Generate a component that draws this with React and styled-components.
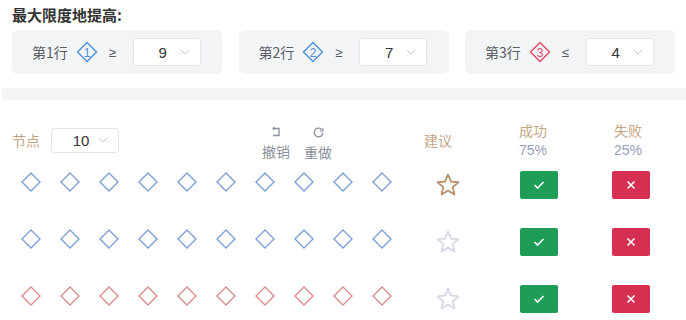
import React from "react";
import styled, { createGlobalStyle } from "styled-components";

const Global = createGlobalStyle`
  body {
    margin: 0;
    background: #fff;
    font-family: "Noto Sans CJK SC", "Noto Sans", sans-serif;
  }
`;

const BLUE = "#7b9fd3";
const RED = "#d98c88";

function Chevron() {
  return (
    <svg width="10" height="6" viewBox="0 0 10 6">
      <path d="M1 1 L5 5 L9 1" fill="none" stroke="#c4c7cd" strokeWidth="1" />
    </svg>
  );
}

function Diamond({ color }) {
  return (
    <svg width="20" height="20" viewBox="0 0 20 20">
      <polygon points="10,1 19,10 10,19 1,10" fill="none" stroke={color} strokeWidth="1.4" />
    </svg>
  );
}

function Badge({ n, color }) {
  return (
    <svg width="22" height="22" viewBox="0 0 22 22">
      <polygon points="11,1.5 20.5,11 11,20.5 1.5,11" fill="none" stroke={color} strokeWidth="1.4" />
      <text x="11" y="15.5" textAnchor="middle" fontSize="12" fill={color} fontFamily="Liberation Sans, sans-serif">{n}</text>
    </svg>
  );
}

function Star({ color }) {
  return (
    <svg width="26" height="26" viewBox="0 0 24 24">
      <polygon
        points="12,2.5 14.8,8.9 21.6,9.5 16.4,14 18,20.8 12,17.2 6,20.8 7.6,14 2.4,9.5 9.2,8.9"
        fill="none"
        stroke={color}
        strokeWidth="1.7"
        strokeLinejoin="round"
      />
    </svg>
  );
}

function UndoIcon() {
  return (
    <svg width="12" height="12" viewBox="0 0 12 12">
      <path d="M3 2.5 H9 V9.5 H3" fill="none" stroke="#8b909c" strokeWidth="1.3" />
      <path d="M4.5 1 L3 2.5 L4.5 4" fill="none" stroke="#8b909c" strokeWidth="1.1" />
    </svg>
  );
}

function RedoIcon() {
  return (
    <svg width="13" height="13" viewBox="0 0 24 24" fill="none" stroke="#8b909c" strokeWidth="2.4">
      <path d="M20 12a8 8 0 1 1-2.4-5.7" />
      <path d="M20 4v5h-5" />
    </svg>
  );
}

const rules = [
  { n: 1, color: "#4d8fd8", op: "≥", value: 9 },
  { n: 2, color: "#4d8fd8", op: "≥", value: 7 },
  { n: 3, color: "#de4a62", op: "≤", value: 4 },
];

const rows = [
  { color: BLUE, star: "#b9946c" },
  { color: BLUE, star: "#d7d9e5" },
  { color: RED, star: "#d7d9e5" },
];

export default function App() {
  return (
    <>
      <Global />
      <Page>
        <Title>最大限度地提高:</Title>
        <Cards>
          {rules.map((r) => (
            <Card key={r.n}>
              <CardLabel>第{r.n}行</CardLabel>
              <Badge n={r.n} color={r.color} />
              <Op>{r.op}</Op>
              <Select>
                <span>{r.value}</span>
                <Chevron />
              </Select>
            </Card>
          ))}
        </Cards>
      </Page>
      <Strip />
      <Board>
        <HeaderRow>
          <Controls>
            <Label>节点</Label>
            <Select $small>
              <span>10</span>
              <Chevron />
            </Select>
            <Actions>
              <Action>
                <UndoIcon />
                <span>撤销</span>
              </Action>
              <Action>
                <RedoIcon />
                <span>重做</span>
              </Action>
            </Actions>
          </Controls>
          <Col $shift={-10}>
            <Label>建议</Label>
          </Col>
          <Col $shift={-6}>
            <Label>成功</Label>
            <Percent>75%</Percent>
          </Col>
          <Col $shift={-3}>
            <Label>失败</Label>
            <Percent>25%</Percent>
          </Col>
        </HeaderRow>
        {rows.map((row, i) => (
          <Row key={i}>
            <Nodes>
              {Array.from({ length: 10 }).map((_, j) => (
                <Diamond key={j} color={row.color} />
              ))}
            </Nodes>
            <Col>
              <Star color={row.star} />
            </Col>
            <Col>
              <Btn $bg="#1d9d55">
                <svg width="12" height="10" viewBox="0 0 12 10">
                  <path d="M1.5 5 L4.6 8 L10.5 2" fill="none" stroke="#fff" strokeWidth="1.6" />
                </svg>
              </Btn>
            </Col>
            <Col>
              <Btn $bg="#d52f51">
                <svg width="10" height="10" viewBox="0 0 10 10">
                  <path d="M1.5 1.5 L8.5 8.5 M8.5 1.5 L1.5 8.5" stroke="#fff" strokeWidth="1.6" />
                </svg>
              </Btn>
            </Col>
          </Row>
        ))}
      </Board>
    </>
  );
}

const Page = styled.div`
  padding: 5px 11px 0 12px;
`;

const Title = styled.div`
  font-size: 15px;
  font-weight: 700;
  color: #333;
  line-height: 20px;
`;

const Cards = styled.div`
  margin-top: 5px;
  display: grid;
  grid-template-columns: repeat(3, 210px);
  justify-content: space-between;
`;

const Card = styled.div`
  height: 44px;
  background: #f3f4f6;
  border-radius: 6px;
  display: flex;
  align-items: center;
  padding-left: 20px;
  box-sizing: border-box;

  svg {
    margin-left: 8px;
  }
`;

const CardLabel = styled.span`
  font-size: 14px;
  color: #5a5d63;
`;

const Op = styled.span`
  font-family: "Liberation Sans", sans-serif;
  font-size: 13px;
  color: #555;
  margin-left: 11px;
  width: 24px;
`;

const Select = styled.div`
  width: 68px;
  height: ${(p) => (p.$small ? 25 : 28)}px;
  margin-left: ${(p) => (p.$small ? 11 : 0)}px;
  background: #fff;
  border: 1px solid #e3e5ea;
  border-radius: 3px;
  box-sizing: border-box;
  display: flex;
  align-items: center;
  padding: 0 10px 0 20px;
  justify-content: space-between;
  font-family: "Liberation Sans", sans-serif;
  font-size: 15px;
  color: #333;

  span {
    width: 18px;
    text-align: center;
  }
  svg {
    margin-left: 0;
  }
`;

const Strip = styled.div`
  margin: 14px 0 0 2px;
  height: 12px;
  background: #f4f5f7;
`;

const Board = styled.div`
  padding: 20px 0 0 12px;
`;

const HeaderRow = styled.div`
  display: grid;
  grid-template-columns: 400px 72px 110px 74px;
  height: 36px;
  align-items: center;
`;

const Controls = styled.div`
  display: flex;
  align-items: center;
`;

const Label = styled.span`
  font-size: 14px;
  color: #c4a582;
  line-height: 18px;
`;

const Percent = styled.span`
  font-family: "Liberation Sans", sans-serif;
  font-size: 14px;
  color: #96a0b8;
  line-height: 18px;
`;

const Actions = styled.div`
  display: flex;
  gap: 14px;
  margin-left: 143px;
  padding-top: 6px;
`;

const Action = styled.div`
  display: flex;
  flex-direction: column;
  align-items: center;
  gap: 5px;
  font-size: 14px;
  color: #8b909c;
  line-height: 16px;
`;

const Col = styled.div`
  display: flex;
  flex-direction: column;
  align-items: center;
  justify-content: center;
  gap: 2px;
  transform: translateX(${(p) => p.$shift || 0}px);
`;

const Row = styled.div`
  display: grid;
  grid-template-columns: 400px 72px 110px 74px;
  height: 57px;
  align-items: center;
`;

const Nodes = styled.div`
  display: flex;
  gap: 19px;
  padding-left: 9px;
  margin-top: -6px;
`;

const Btn = styled.div`
  width: 38px;
  height: 28px;
  border-radius: 2px;
  background: ${(p) => p.$bg};
  display: flex;
  align-items: center;
  justify-content: center;
`;
